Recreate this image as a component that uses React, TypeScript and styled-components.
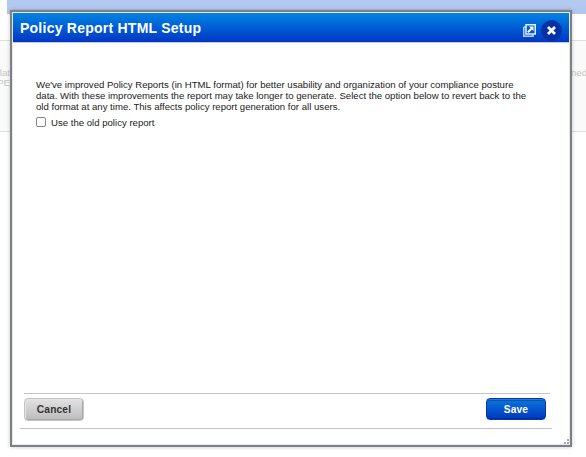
import React from 'react';
import styled, { createGlobalStyle } from 'styled-components';

const GlobalStyle = createGlobalStyle`
  * { box-sizing: border-box; }
  body { margin: 0; background: #fff; font-family: "Liberation Sans", Arial, sans-serif; }
`;

const Page = styled.div`
  position: relative;
  width: 586px;
  height: 457px;
  overflow: hidden;
  background: #fff;
`;

const TopBand = styled.div`
  height: 14px;
  margin-left: 7px;
  background: linear-gradient(#b5caf0, #b0c6ee);
`;

const BackgroundPanel = styled.div`
  display: flex;
  justify-content: space-between;
  height: 92px;
  margin-top: 26px;
  padding-top: 27px;
  border: solid #dedede;
  border-width: 1px 0;
  background: #fafafa;
  color: #c4c4c4;
  font-size: 9.6px;
  line-height: 10px;
`;

const ClippedText = styled.div<{ $end?: boolean }>`
  display: flex;
  flex-direction: column;
  align-items: ${p => (p.$end ? 'flex-end' : 'flex-start')};
  width: ${p => (p.$end ? 10 : 15)}px;
  overflow: hidden;
  white-space: nowrap;
`;

const Dialog = styled.section`
  position: absolute;
  left: 10px;
  top: 10px;
  width: 562px;
  height: 437px;
  display: flex;
  flex-direction: column;
  border: 2px solid #7c8086;
  background: #fff;
  box-shadow: inset 0 0 0 1px #e4e8ec, 0 0 4px rgba(0, 0, 0, 0.22);
`;

const Header = styled.header`
  display: flex;
  align-items: center;
  height: 30px;
  margin: 1px 1px 0;
  padding: 0 7px 0 8px;
  border-bottom: 1px solid #c5c9d0;
  background: linear-gradient(#0084e2, #0036c6) padding-box;
`;

const Title = styled.h1`
  flex: 1;
  margin: 2px 0 0 -1px;
  color: #fff;
  font-size: 14px;
  line-height: 29px;
  letter-spacing: 0.24px;
  white-space: nowrap;
`;

const HeaderIcons = styled.div`
  display: flex;
  align-items: center;
  gap: 5px;
  padding-top: 5px;
`;

const IconButton = styled.button`
  display: flex;
  padding: 0;
  border: 0;
  background: none;
`;

const Content = styled.main`
  flex: 1;
  padding: 36px 0 0 24px;
  color: #222;
  font-size: 9.6px;
`;

const Line = styled.div`
  height: 11px;
  line-height: 11px;
  white-space: nowrap;
`;

const Option = styled.label`
  display: flex;
  align-items: center;
  gap: 5px;
  height: 12px;
  margin-top: 4px;
  white-space: nowrap;
`;

const Checkbox = styled.input`
  appearance: none;
  width: 10px;
  height: 10px;
  margin: 0;
  border: 1px solid #858585;
  border-radius: 2px;
  background: #fff;
`;

const Footer = styled.footer`
  height: 36px;
  margin: 0 18px 16px 8px;
  border-bottom: 1px solid #c4c4c4;
`;

const Actions = styled.div`
  display: flex;
  justify-content: space-between;
  margin: 0 2px 0 4px;
  padding: 4px 4px 0 0;
  border-top: 1px solid #c4c4c4;
`;

const Button = styled.button<{ $primary?: boolean }>`
  width: 60px;
  height: ${p => (p.$primary ? 22 : 23)}px;
  padding: 0;
  border: 1px solid ${p => (p.$primary ? '#0738a8' : '#c4c4c4')};
  border-radius: 4px;
  background: ${p => (p.$primary ? 'linear-gradient(#0878dc, #0036c0)' : 'linear-gradient(#e2e2e2, #bcbcbc)')};
  box-shadow: ${p => (p.$primary
    ? 'inset 0 1px #2f77d2, inset 0 2px #0756b4, inset 0 -1px #022fa5'
    : 'inset 1px 1px #e4e4e4, inset -1px -1px #aaa')};
  color: ${p => (p.$primary ? '#fff' : '#333')};
  font: bold 10.2px "Liberation Sans", Arial, sans-serif;
  letter-spacing: 0.15px;
`;

const Grip = styled.svg`
  position: absolute;
  right: 1px;
  bottom: 1px;
`;

const lines = [
  "We've improved Policy Reports (in HTML format) for better usability and organization of your compliance posture",
  'data. With these improvements the report may take longer to generate. Select the option below to revert back to the',
  'old format at any time. This affects policy report generation for all users.',
];

export default function App() {
  return (
    <Page>
      <GlobalStyle />
      <TopBand />
      <BackgroundPanel>
        <ClippedText $end><span>lat</span><span>PE</span></ClippedText>
        <ClippedText><span>nedu</span></ClippedText>
      </BackgroundPanel>
      <Dialog>
        <Header>
          <Title>Policy Report HTML Setup</Title>
          <HeaderIcons>
            <IconButton aria-label="Open in new window">
              <svg width="13" height="13" viewBox="0 0 13 13" fill="none">
                <path d="M.75 3v9.25H10V10.5M.75 3H3" stroke="#b9d6f7" strokeWidth="1.5" />
                <path d="M3 .75h9.25V10H3z" stroke="#e5f0ff" strokeWidth="1.5" />
                <path d="M6 2.5h4.5V7L9 5.6 5.6 9 4.2 7.6 7.6 4.1z" fill="#fff" />
              </svg>
            </IconButton>
            <IconButton aria-label="Close">
              <svg width="21" height="21" viewBox="0 0 21 21">
                <circle cx="10.5" cy="10.5" r="10.4" fill="#0430a8" />
                <path d="m7 7 7 7m0-7-7 7" stroke="#fff" strokeWidth="2.8" />
              </svg>
            </IconButton>
          </HeaderIcons>
        </Header>
        <Content>
          {lines.map(text => <Line key={text}>{text}</Line>)}
          <Option><Checkbox type="checkbox" />Use the old policy report</Option>
        </Content>
        <Footer>
          <Actions>
            <Button>Cancel</Button>
            <Button $primary>Save</Button>
          </Actions>
        </Footer>
        <Grip width="5" height="5" fill="#aaa">
          <path d="M3 0h2v2H3zM0 3h2v2H0zM3 3h2v2H3z" />
        </Grip>
      </Dialog>
    </Page>
  );
}
